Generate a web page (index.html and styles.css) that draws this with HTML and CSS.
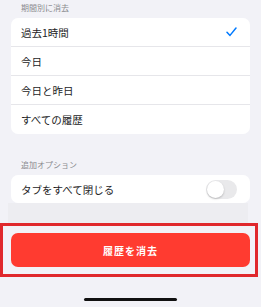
FILE: index.html
```html
<!DOCTYPE html>
<html lang="ja">
<head>
    <meta charset="UTF-8">
    <meta name="viewport" content="width=device-width, initial-scale=1.0">
    <title>履歴を消去</title>
    <link rel="stylesheet" href="styles.css">
</head>
<body>

    <div class="screen">
        <!-- Period list -->
        <div class="section-title first">期間別に消去</div>
        <div class="card">
            <div class="row">
                <span>過去1時間</span>
                <svg class="check" width="11" height="10" viewBox="0 0 11 10">
                    <path d="M1 5.2 L4 8.4 L10 1" fill="none" stroke="#007aff" stroke-width="1.5" stroke-linecap="round" stroke-linejoin="round"/>
                </svg>
            </div>
            <div class="row"><span>今日</span></div>
            <div class="row"><span>今日と昨日</span></div>
            <div class="row last"><span>すべての履歴</span></div>
        </div>

        <!-- Extra options -->
        <div class="section-title second">追加オプション</div>
        <div class="card">
            <div class="row last option">
                <span>タブをすべて閉じる</span>
                <div class="toggle"><div class="knob"></div></div>
            </div>
        </div>

        <div class="shade"></div>

        <!-- Clear button -->
        <div class="action">
            <button class="btn">履歴を消去</button>
        </div>

        <div class="home">
            <div class="home-bar"></div>
        </div>
    </div>

</body>
</html>
```

FILE: styles.css
```css
body {
    margin: 0;
    padding: 0;
    background-color: #f2f2f7;
    font-family: "Noto Sans CJK JP", "Noto Sans", sans-serif;
    color: #1c1c1e;
}
.screen {
    width: 261px;
    height: 307px;
    overflow: hidden;
}
.section-title {
    font-size: 8px;
    line-height: 11px;
    color: #8a8a8e;
    padding-left: 21px;
    display: flex;
    align-items: flex-end;
}
.section-title.first {
    height: 18px;
    align-items: flex-start;
    padding-top: 2px;
    box-sizing: border-box;
}
.section-title.second {
    height: 41px;
    padding-bottom: 5px;
    box-sizing: border-box;
}
.card {
    margin: 0 11px;
    background-color: white;
    border-radius: 7px;
    overflow: hidden;
}
.row {
    height: 29px;
    box-sizing: border-box;
    padding: 0 13px 0 10px;
    display: flex;
    align-items: center;
    justify-content: space-between;
    font-size: 10.5px;
    border-bottom: 1px solid #e6e6ea;
}
.row.last {
    border-bottom: none;
}
.row.option {
    height: 28px;
    padding-right: 13px;
}
.check {
    display: block;
    margin-top: -1px;
}
.toggle {
    width: 31px;
    height: 19px;
    border-radius: 10px;
    background-color: #e9e9eb;
    position: relative;
}
.knob {
    position: absolute;
    left: 1px;
    top: 1px;
    width: 17px;
    height: 17px;
    border-radius: 50%;
    background-color: white;
    box-shadow: 0 1px 2px rgba(0, 0, 0, 0.22);
}
.shade {
    height: 20px;
    margin: 0 13px 0 8px;
    background-color: #ededf1;
}
.action {
    width: 258px;
    height: 54px;
    box-sizing: border-box;
    border: 3px solid #e0282c;
    padding: 7px 0 0 8px;
    background-color: #f2f2f7;
}
.btn {
    display: block;
    width: 239px;
    height: 34px;
    border: none;
    border-radius: 7px;
    background-color: #ff3b30;
    color: white;
    font-family: "Noto Sans CJK JP", sans-serif;
    font-size: 10px;
    font-weight: bold;
    letter-spacing: 1px;
    padding: 0;
}
.home {
    height: 30px;
    display: flex;
    justify-content: center;
    padding-top: 21px;
    box-sizing: border-box;
}
.home-bar {
    width: 93px;
    height: 3px;
    border-radius: 2px;
    background-color: #111;
}
```
